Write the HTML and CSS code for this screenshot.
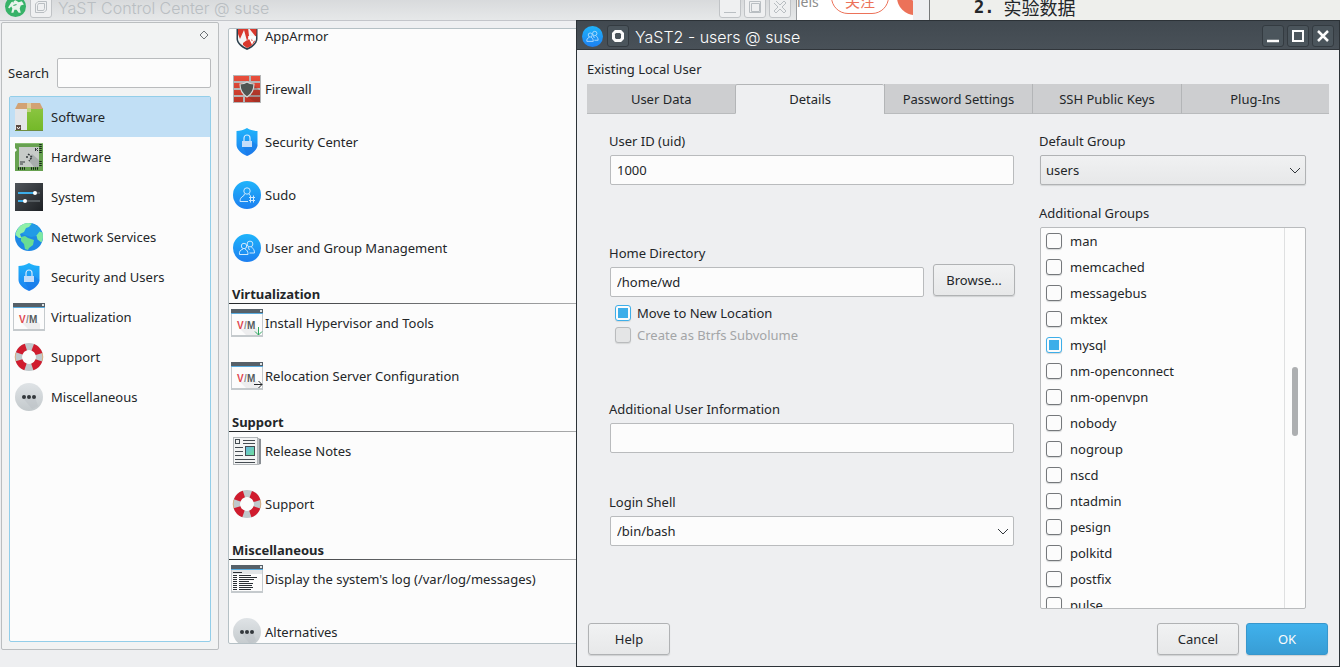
FILE: index.html
```html
<!DOCTYPE html>
<html lang="en">
<head>
<meta charset="utf-8">
<title>YaST Control Center</title>
<link rel="stylesheet" href="styles.css">
</head>
<body>
<svg class="sprite" width="0" height="0" aria-hidden="true">
  <defs>
    <linearGradient id="blue" x1="0" y1="0" x2="0" y2="1"><stop offset="0" stop-color="#1fb4fb"/><stop offset="1" stop-color="#1d7ff0"/></linearGradient>
    <linearGradient id="grey" x1="0" y1="0" x2="0" y2="1"><stop offset="0" stop-color="#dfe3e6"/><stop offset="1" stop-color="#c3c9cc"/></linearGradient>
    <linearGradient id="green" x1="0" y1="0" x2="0" y2="1"><stop offset="0" stop-color="#8bc541"/><stop offset="1" stop-color="#73b828"/></linearGradient>
    <linearGradient id="dark" x1="0" y1="0" x2="1" y2="1"><stop offset="0" stop-color="#4f5459"/><stop offset="1" stop-color="#1d2024"/></linearGradient>
    <linearGradient id="brick" x1="0" y1="0" x2="0" y2="1"><stop offset="0" stop-color="#ea4f3c"/><stop offset="1" stop-color="#bb3427"/></linearGradient>
    <linearGradient id="pic" x1="0" y1="0" x2="1" y2="1"><stop offset="0" stop-color="#64b6e6"/><stop offset="1" stop-color="#70e094"/></linearGradient>
    <symbol id="i-software" viewBox="0 0 28 28">
      <rect y="5" width="12" height="23" fill="#e4e5e8"/><rect x="12" y="5" width="16" height="23" fill="url(#green)"/>
      <path d="M3 0h22l3 6H0z" fill="#d2a274"/><path d="M12 0h4v9h-4z" fill="#e0ce9d"/><path d="M12 5h4v4h-4z" fill="#bfd37d"/>
      <rect y="27" width="28" height="1" fill="#6e8d3f"/><rect x="1" y="22" width="5" height="5" fill="#5b4a42"/><path d="M2 24l1.500 2L5 24" fill="none" stroke="#fff"/>
    </symbol>
    <symbol id="i-hardware" viewBox="0 0 28 28">
      <rect width="28" height="28" fill="#67a150"/><rect width="28" height="1" fill="#87bd70"/><path d="M0 5l2 2-2 2" fill="#fff"/>
      <rect x="4" y="4" width="20" height="20" fill="#c7cbc8"/><path d="M14 18l3-7 7 6v7h-5z" fill="#a9aead"/>
      <path d="M25.500 1v10M25.500 18v6M3 25.500h8M16 25.500h8" stroke="#17251a" stroke-width="2.500" stroke-dasharray="1 1"/>
      <path d="M20.500 5v3M23 5l-1.500 1.500L23 8M5 21h3M5 19h5" stroke="#30363a" fill="none"/>
      <path d="M11 14h2M13 11l4 3-3 4" stroke="#33383a" stroke-width="1.500" stroke-dasharray="2 1" fill="none"/>
    </symbol>
    <symbol id="i-system" viewBox="0 0 28 28">
      <rect width="28" height="28" fill="url(#dark)"/><path d="M3 10h22M3 18h22" stroke="#555b60" stroke-width="2"/>
      <path d="M3 10h16M3 18h6" stroke="#3daee9" stroke-width="2"/><circle cx="20" cy="10" r="2" fill="#fff"/><circle cx="10" cy="18" r="2" fill="#fff"/>
    </symbol>
    <symbol id="i-network" viewBox="0 0 28 28">
      <circle cx="14" cy="14" r="14" fill="#1e88e5"/><path d="M14 0a14 14 0 0 1 13 9l-5 4-6 1-9-3z" fill="#229be6"/>
      <path d="M3 5.500A14 14 0 0 1 17 .5L14 4l-3 1-2 4-4 2 1 3 2 1-4 0-3.500-3A14 14 0 0 1 3 5.500z" fill="#8ff0a8"/>
      <path d="M6 14l4-1 3 2 6 2-1 5-4 3-1 2-3-1-1-5-3-3z" fill="#69dd93"/>
      <path d="M27.500 9.500l-3-1-3 4 1 4 4 3a14 14 0 0 0 1-10z" fill="#7de8a3"/>
    </symbol>
    <symbol id="i-shield" viewBox="0 0 28 28">
      <path d="M14 0c3 2 7 3 10.500 3v14c0 4-5 9-10.500 11C8.500 26 3.500 21 3.500 17V3C7 3 11 2 14 0z" fill="url(#blue)"/>
      <path d="M19 13l5.500 4c0 4-5 9-10 11l-5-10z" fill="#1a6de0" opacity=".35"/>
      <rect x="9" y="13" width="10" height="6" fill="#c3ddfa"/><path d="M11 13v-3a3 3 0 0 1 6 0v3" fill="none" stroke="#d4e9fd" stroke-width="1.200"/>
    </symbol>
    <symbol id="i-window" viewBox="0 0 32 28">
      <rect width="32" height="28" fill="#c5cacd"/><rect x="1" y="5" width="30" height="21" fill="#fcfcfc"/><rect width="32" height="4" fill="#566068"/>
      <rect y="4" width="32" height="1" fill="#5aade0"/><rect x="29" y="1" width="2" height="2" fill="#dfe3e5"/>
    </symbol>
    <symbol id="i-vm" viewBox="0 0 32 28">
      <use href="#i-window"/><path d="M9 20l6 6h12v-5l-2-2z" fill="#eeeeef"/>
      <text x="6" y="20" class="vm-mark" fill="#e0474f">V</text><text x="13" y="20" class="vm-mark" fill="#8a8f92">/</text><text x="16" y="20" class="vm-mark" fill="#565c60">M</text>
    </symbol>
    <symbol id="i-vm-down" viewBox="0 0 32 28"><use href="#i-vm"/><path d="M27.500 18v8M24 22.500l3.500 3.500 3.500-3.500" stroke="#2fa860" fill="none"/></symbol>
    <symbol id="i-vm-right" viewBox="0 0 32 28"><use href="#i-vm"/><path d="M23 22.500h8M27.500 19l3.500 3.500-3.500 3.500" stroke="#232629" fill="none"/></symbol>
    <symbol id="i-support" viewBox="0 0 28 28">
      <circle cx="14" cy="14" r="10.500" fill="none" stroke="#c0c8cb" stroke-width="7"/>
      <circle cx="14" cy="14" r="10.500" fill="none" stroke="#d01c2e" stroke-width="7" stroke-dasharray="9.500 6.993" stroke-dashoffset="-3.500"/>
      <path d="M.8 10a14 14 0 0 0 0 8M27.200 10a14 14 0 0 1 0 8" stroke="#d6ad82" fill="none"/>
    </symbol>
    <symbol id="i-misc" viewBox="0 0 28 28">
      <circle cx="14" cy="14" r="14" fill="url(#grey)"/><path d="M8 15l9 11 6-3-3-9z" fill="#b8bfc2" opacity=".4"/>
      <circle cx="9" cy="14" r="2" fill="#33383c"/><circle cx="14" cy="14" r="2" fill="#33383c"/><circle cx="19" cy="14" r="2" fill="#33383c"/>
    </symbol>
    <symbol id="i-apparmor" viewBox="0 0 28 28">
      <path d="M14 0l10.500 3v14c0 4-5 9-10.500 11C8.500 26 3.500 21 3.500 17V3z" fill="#2b3f4c"/>
      <path d="M14 1.500L23 4v13c0 3-4 7-9 9-5-2-9-6-9-9V4z" fill="#f4f4f4"/>
      <path d="M14 2L5 4v8l2 5 4-9 3 11 2-5-1-9 8 10 .5-4V4zM10 21l4-3v8l-4-3zM14 18l3-1 5 2c-1 3-5 6-8 7z" fill="#d9382d"/>
      <path d="M16 15h6l-3 6z" fill="none" stroke="#fff" stroke-width="1.500"/>
    </symbol>
    <symbol id="i-firewall" viewBox="0 0 28 28">
      <rect width="28" height="28" fill="#b4b5b6"/>
      <path d="M1 1h15v5H1zM18 1h9v5h-9zM1 8h9v5H1zM12 8h15v5H12zM1 15h15v5H1zM18 15h9v5h-9zM1 22h9v5H1zM12 22h15v5H12z" fill="url(#brick)"/>
      <path d="M21 10l6 6v11H22l-9-6z" fill="#70281f" opacity=".3"/>
      <path d="M14 7c2 1.500 5 2 7 2 0 6-2 10-7 13-5-3-7-7-7-13 2 0 5-.5 7-2z" fill="#4e5552" stroke="#d5d8d6" stroke-width="1.200"/>
    </symbol>
    <symbol id="i-sudo" viewBox="0 0 28 28">
      <circle cx="14" cy="14" r="14" fill="url(#blue)"/>
      <g fill="none" stroke="#cde8fd"><circle cx="14" cy="10" r="3.200"/><path d="M11.500 13l-1 2C8 16 7 18 7 20.500h8M16 13l1 1.500"/><path d="M17.500 14.500v7M20.500 14.500v7M16 16.500h6M16 19.500h6"/></g>
    </symbol>
    <symbol id="i-users" viewBox="0 0 28 28">
      <circle cx="14" cy="14" r="14" fill="url(#blue)"/>
      <g fill="none" stroke="#cde8fd"><circle cx="11" cy="12" r="2.700"/><circle cx="17" cy="10" r="2.900"/><path d="M10 15c-3 1-4 3-3.500 5.500h8.500c0-3-1-4.500-3-5.500M15 13l1.500 3M18.500 13c2 2 3 3 3 6h-5"/></g>
    </symbol>
    <symbol id="i-notes" viewBox="0 0 28 28">
      <path d="M24 1l4 1v25l-4 1z" fill="#898e93"/><path d="M25.500 2v25" stroke="#c2c5c8"/><rect x=".5" y=".5" width="24" height="27" fill="#f3f4f4" stroke="#b1b5b8"/>
      <path d="M10 3.500h12M10 6.500h12M2 10.500h8M2 14.500h8M2 18.500h8M2 22.500h20M2 25.500h20" stroke="#454c52"/>
      <rect x="2.500" y="2.500" width="4" height="4" fill="none" stroke="#454c52"/><rect x="12.500" y="9.500" width="9" height="9" fill="url(#pic)" stroke="#454c52"/>
    </symbol>
    <symbol id="i-log" viewBox="0 0 32 28">
      <use href="#i-window"/><rect x="1" y="5" width="30" height="4" fill="#e2e5e7"/>
      <path d="M2 7.500h9M8 10.500h12M8 12.500h18M8 14.500h15M8 16.500h10M8 18.500h14M8 20.500h13M8 22.500h14M8 24.500h12M2 10.500h4M2 12.500h4M2 14.500h4M2 16.500h4M2 18.500h4M2 20.500h4M2 22.500h4M2 24.500h4" stroke="#2b3035"/>
    </symbol>
    <symbol id="i-yast" viewBox="0 0 20 20">
      <circle cx="10" cy="10" r="10" fill="#37b268"/><path d="M3 11l3-5 4-2 3 2 3-1 2 3-3 1-1 3 1 4h-2l-2-3-2 0-1 3H6l1-4-1-2-2 2z" fill="#e9f4ec"/><path d="M7 3l1 3M8 9l3-1" stroke="#37b268"/>
    </symbol>
    <symbol id="i-chevron" viewBox="0 0 12 8"><path d="M1 1l5 5 5-5" fill="none" stroke="#31363b"/></symbol>
    <symbol id="i-pin" viewBox="0 0 14 14"><path d="M4.500 2.500h5l2 2v5l-2 2h-5l-2-2v-5z" fill="none" stroke="currentColor" stroke-width="3"/></symbol>
    <symbol id="i-pin-off" viewBox="0 0 14 14"><path d="M4 1.500h8.500V10L10 12.500H1.500V4zM4.500 3.500h6v5l-1 2h-6v-5z" fill="none" stroke="currentColor"/></symbol>
    <symbol id="i-min" viewBox="0 0 14 14"><path d="M1 12h12" stroke="currentColor" stroke-width="2.500"/></symbol>
    <symbol id="i-max" viewBox="0 0 14 14"><path d="M2 2h10v10H2z" fill="none" stroke="currentColor" stroke-width="2"/></symbol>
    <symbol id="i-close" viewBox="0 0 14 14"><path d="M2 2l10 10M12 2L2 12" stroke="currentColor" stroke-width="2.500"/></symbol>
    <symbol id="i-min-off" viewBox="0 0 14 14"><path d="M1 12.500h12" stroke="currentColor"/></symbol>
    <symbol id="i-max-off" viewBox="0 0 14 14"><path d="M1.500 1.500h11v11h-11zM3.500 3.500h8v8h-8z" fill="none" stroke="currentColor"/></symbol>
    <symbol id="i-close-off" viewBox="0 0 14 14"><path d="M1 3l4 4-4 4 2 2 4-4 4 4 2-2-4-4 4-4-2-2-4 4-4-4" fill="none" stroke="currentColor"/></symbol>
  </defs>
</svg>

<div class="desktop">
  <div class="strip">
    <div class="strip-page">
      <span class="strip-name">iels</span>
      <button class="follow">关注</button>
      <span class="dot">1</span>
    </div>
    <div class="strip-gutter"></div>
    <div class="strip-note"><b>2.</b><span>实验数据</span></div>
  </div>

  <section class="window center" aria-label="YaST Control Center">
    <header class="bar bar-inactive">
      <svg class="app-icon"><use href="#i-yast"/></svg>
      <button class="win-btn" aria-label="Window menu"><svg><use href="#i-pin-off"/></svg></button>
      <h1 class="win-title">YaST Control Center @ suse</h1>
      <button class="win-btn" aria-label="Minimize"><svg><use href="#i-min-off"/></svg></button>
      <button class="win-btn" aria-label="Maximize"><svg><use href="#i-max-off"/></svg></button>
      <button class="win-btn" aria-label="Close"><svg><use href="#i-close-off"/></svg></button>
    </header>
    <div class="center-body">
      <aside class="side">
        <div class="side-top"><svg class="float" viewBox="0 0 10 10"><path d="M5 1l4 4-4 4-4-4z" fill="none" stroke="#6f7477"/></svg></div>
        <div class="search"><label for="q">Search</label><input id="q" class="field" type="text"></div>
        <nav class="cats">
          <a href="#" class="cat current"><svg><use href="#i-software"/></svg>Software</a>
          <a href="#" class="cat"><svg><use href="#i-hardware"/></svg>Hardware</a>
          <a href="#" class="cat"><svg><use href="#i-system"/></svg>System</a>
          <a href="#" class="cat"><svg><use href="#i-network"/></svg>Network Services</a>
          <a href="#" class="cat"><svg><use href="#i-shield"/></svg>Security and Users</a>
          <a href="#" class="cat"><svg><use href="#i-vm"/></svg>Virtualization</a>
          <a href="#" class="cat"><svg><use href="#i-support"/></svg>Support</a>
          <a href="#" class="cat"><svg><use href="#i-misc"/></svg>Miscellaneous</a>
        </nav>
      </aside>
      <main class="modules">
        <div class="modules-inner">
          <a href="#" class="mod"><svg><use href="#i-apparmor"/></svg>AppArmor</a>
          <a href="#" class="mod"><svg><use href="#i-firewall"/></svg>Firewall</a>
          <a href="#" class="mod"><svg><use href="#i-shield"/></svg>Security Center</a>
          <a href="#" class="mod"><svg><use href="#i-sudo"/></svg>Sudo</a>
          <a href="#" class="mod"><svg><use href="#i-users"/></svg>User and Group Management</a>
          <h2 class="group">Virtualization</h2>
          <a href="#" class="mod"><svg><use href="#i-vm-down"/></svg>Install Hypervisor and Tools</a>
          <a href="#" class="mod"><svg><use href="#i-vm-right"/></svg>Relocation Server Configuration</a>
          <h2 class="group">Support</h2>
          <a href="#" class="mod"><svg><use href="#i-notes"/></svg>Release Notes</a>
          <a href="#" class="mod"><svg><use href="#i-support"/></svg>Support</a>
          <h2 class="group">Miscellaneous</h2>
          <a href="#" class="mod"><svg><use href="#i-log"/></svg>Display the system's log (/var/log/messages)</a>
          <a href="#" class="mod"><svg><use href="#i-misc"/></svg>Alternatives</a>
        </div>
      </main>
    </div>
  </section>

  <section class="window dialog" role="dialog" aria-label="YaST2 - users">
    <header class="bar bar-active">
      <svg class="app-icon"><use href="#i-users"/></svg>
      <button class="win-btn" aria-label="Window menu"><svg><use href="#i-pin"/></svg></button>
      <h1 class="win-title">YaST2 - users @ suse</h1>
      <button class="win-btn" aria-label="Minimize"><svg><use href="#i-min"/></svg></button>
      <button class="win-btn" aria-label="Maximize"><svg><use href="#i-max"/></svg></button>
      <button class="win-btn" aria-label="Close"><svg><use href="#i-close"/></svg></button>
    </header>
    <form class="dialog-body">
      <h2 class="heading">Existing Local User</h2>
      <div class="tabs" role="tablist">
        <button type="button" class="tab" role="tab">User Data</button>
        <button type="button" class="tab active" role="tab" aria-selected="true">Details</button>
        <button type="button" class="tab" role="tab">Password Settings</button>
        <button type="button" class="tab" role="tab">SSH Public Keys</button>
        <button type="button" class="tab" role="tab">Plug-Ins</button>
      </div>
      <div class="panel">
        <div class="column left">
          <div class="row">
            <label class="label" for="uid">User ID (uid)</label>
            <input id="uid" class="field" type="text" value="1000">
          </div>
          <div class="row">
            <label class="label" for="home">Home Directory</label>
            <div class="home">
              <input id="home" class="field" type="text" value="/home/wd">
              <button type="button" class="btn">Browse...</button>
            </div>
            <div class="checks">
              <label class="check"><input type="checkbox" checked>Move to New Location</label>
              <label class="check disabled"><input type="checkbox" disabled>Create as Btrfs Subvolume</label>
            </div>
          </div>
          <div class="row">
            <label class="label" for="info">Additional User Information</label>
            <input id="info" class="field" type="text">
          </div>
          <div class="row">
            <label class="label" for="shell">Login Shell</label>
            <div class="combo">
              <select id="shell" class="field"><option>/bin/bash</option></select>
              <svg class="chevron"><use href="#i-chevron"/></svg>
            </div>
          </div>
        </div>
        <div class="column">
          <label class="label" for="group">Default Group</label>
          <div class="combo">
            <select id="group" class="field raised"><option>users</option></select>
            <svg class="chevron"><use href="#i-chevron"/></svg>
          </div>
          <h3 class="label groups-label">Additional Groups</h3>
          <div class="groups">
            <div class="groups-list">
              <label class="check"><input type="checkbox">man</label>
              <label class="check"><input type="checkbox">memcached</label>
              <label class="check"><input type="checkbox">messagebus</label>
              <label class="check"><input type="checkbox">mktex</label>
              <label class="check"><input type="checkbox" checked>mysql</label>
              <label class="check"><input type="checkbox">nm-openconnect</label>
              <label class="check"><input type="checkbox">nm-openvpn</label>
              <label class="check"><input type="checkbox">nobody</label>
              <label class="check"><input type="checkbox">nogroup</label>
              <label class="check"><input type="checkbox">nscd</label>
              <label class="check"><input type="checkbox">ntadmin</label>
              <label class="check"><input type="checkbox">pesign</label>
              <label class="check"><input type="checkbox">polkitd</label>
              <label class="check"><input type="checkbox">postfix</label>
              <label class="check"><input type="checkbox">pulse</label>
            </div>
            <div class="track"><div class="thumb"></div></div>
          </div>
        </div>
      </div>
      <footer class="actions">
        <button type="button" class="btn help">Help</button>
        <button type="button" class="btn">Cancel</button>
        <button type="submit" class="btn primary">OK</button>
      </footer>
    </form>
  </section>
</div>
</body>
</html>
```
FILE: styles.css
```css
* { box-sizing: border-box; }
html, body { height: 100%; }
body, button, input, select {
  font-family: "Noto Sans", "Noto Sans CJK SC", sans-serif;
  font-size: 13px;
  color: #232629;
}
body { margin: 0; line-height: 18px; }
a { color: inherit; text-decoration: none; }
h1, h2, h3 { margin: 0; font-size: 13px; font-weight: 400; }
button { padding: 0; }
.sprite { position: absolute; }
.vm-mark { font: 700 10px "Liberation Sans", sans-serif; }

.desktop { position: relative; height: 100vh; overflow: hidden; background: #eeefec; }
.window { position: absolute; display: flex; flex-direction: column; background: #eeeff1; }

/* Browser strip behind the windows */
.strip { display: flex; height: 20px; padding-left: 797px; overflow: hidden; }
.strip-page { display: flex; width: 116px; align-items: flex-end; background: #fff; overflow: hidden; }
.strip-name { width: 34px; flex: none; height: 27px; line-height: 18px; color: #8c8c8c; font-size: 14px; }
.follow {
  flex: none; width: 58px; height: 34px; margin-bottom: 6px; padding-top: 6px;
  border: 1px solid #ec7259; border-radius: 17px; background: #fff; color: #ec7259; font-size: 15px;
}
.dot { flex: none; width: 36px; height: 36px; margin: 0 0 5px 8px; border-radius: 50%; background: #ec7259; color: #fff; line-height: 46px; text-align: center; }
.strip-gutter { width: 17px; background: #eeeff1; border-right: 1px solid #77797a; }
.strip-note { display: flex; gap: 9px; padding-left: 44px; font: 18px/14px "Noto Sans CJK SC", sans-serif; }
.strip-note b { font-family: "DejaVu Sans Mono", monospace; font-size: 17px; }

/* Title bars */
.bar { display: flex; flex: none; align-items: center; gap: 3px; padding: 2px 5px 0 5px; }
.app-icon { width: 21px; height: 21px; margin-right: 1px; }
.win-title { flex: 1; padding: 2px 0 0 3px; font: 300 16px/20px "Inter", sans-serif; }
.win-btn { display: grid; place-items: center; width: 22px; height: 22px; border: 1px solid; border-radius: 3px; color: inherit; }
.win-btn svg { width: 14px; height: 14px; }
.bar-active { height: 29px; background: linear-gradient(#414950, #495158); border-bottom: 1px solid #31363b; color: #fcfcfc; }
.bar-active .win-btn { background: #4b555c; border-color: #343b41; }
.bar-inactive { height: 30px; background: linear-gradient(#d2d4d6, #e6e8e9); border-bottom: 1px solid #c3c5ca; color: #b9bec2; }
.bar-inactive .win-btn { background: #eff0f1; border-color: #c0c3c6; }

/* Control center */
.center { top: -9px; bottom: 0; left: 0; width: 797px; border-right: 1px solid #9a9da0; }
.center-body { display: flex; flex: 1; gap: 9px; min-height: 0; padding: 1px 8px 17px 1px; }
.side { display: flex; flex: none; flex-direction: column; width: 218px; padding: 7px 7px 7px; border: 1px solid #bbbec0; border-radius: 2px; background: #f2f3f3; }
.side-top { display: flex; height: 28px; justify-content: flex-end; padding-right: 2px; }
.float { width: 10px; height: 10px; }
.search { display: flex; align-items: center; gap: 8px; margin-bottom: 8px; margin-left: -1px; }
.search .field { flex: 1; min-width: 0; }
.cats { flex: 1; border: 1px solid #93cee9; border-radius: 2px; background: #fcfcfc; }
.cat { display: flex; align-items: center; gap: 6px; height: 40px; padding-left: 3px; }
.cat.current { background: #c1dff5; }
.cat svg, .mod svg { flex: none; width: 32px; height: 28px; }
.modules { flex: 1; margin-top: 6px; margin-bottom: 6px; overflow: hidden; border: 1px solid #b5c0c5; border-radius: 2px; background: #fcfcfc; }
.modules-inner { margin-top: -12px; }
.mod { display: flex; gap: 2px; height: 53px; padding: 5px 0 0 2px; line-height: 28px; }
.group {
  height: 22px; padding-left: 3px; line-height: 24px; font-weight: 700;
  border-bottom: 1px solid; border-image: linear-gradient(90deg, #232629, #fcfcfc) 1;
}

/* Form controls */
.field {
  width: 100%; height: 30px; padding: 0 6px; margin: 0;
  border: 1px solid #b9bbbd; border-radius: 2px; background: #fcfcfc; outline: 0;
}
select.field { appearance: none; }
.raised { background: linear-gradient(#f0f1f2, #e7e8e9); padding-left: 5px; border-color: #b0b2b4; box-shadow: 0 1px 1px #d2d4d5; }
.combo { position: relative; }
.chevron { position: absolute; right: 5px; top: 12px; width: 12px; height: 8px; pointer-events: none; }
.btn {
  width: 82px; height: 32px; border: 1px solid #b0b2b4; border-radius: 3px;
  background: linear-gradient(#f1f2f3, #e7e8e9); box-shadow: 0 1px 1px #cfd1d2;
}
.primary { background: linear-gradient(#40b1ec, #389dd5); border-color: #3797cd; color: #fcfcfc; }
.check { display: flex; align-items: center; gap: 6px; }
.check input {
  flex: none; width: 16px; height: 16px; margin: 0; appearance: none;
  border: 1px solid #75787b; border-radius: 3px; background: #fcfcfc; box-shadow: 0 1px 1px #d5d7d8;
}
.check input:checked { border-color: #3daee9; background: linear-gradient(#3daee9, #3daee9) center / 10px 10px no-repeat #fcfcfc; }
.check input:disabled { border-color: #b9bbbd; background: #e4e5e6; }
.disabled { color: #a3a5a7; }

/* User dialog */
.dialog { top: 20px; right: 0; bottom: 0; left: 576px; border: 1px solid #2c3237; }
.dialog-body { display: flex; flex: 1; flex-direction: column; min-height: 0; padding: 10px 10px 11px; }
.heading { margin-bottom: 6px; }
.tabs { display: grid; flex: none; grid-template-columns: repeat(5, 1fr); height: 30px; }
.tab { border: 0; border-left: 1px solid #b3b5b7; border-bottom: 1px solid #b9bbbd; background: #cdced0; }
.tab:first-child { border-left: 0; }
.tab.active { border-top: 1px solid #b3b5b7; border-bottom-color: #eeeff1; border-radius: 2px 2px 0 0; background: #eeeff1; }
.panel { display: grid; flex: 1; grid-template-columns: 405fr 267fr; grid-template-rows: minmax(0, 1fr); gap: 25px; min-height: 0; padding: 18px 23px 14px 22px; }
.column { display: flex; flex-direction: column; min-width: 0; min-height: 0; padding-left: 1px; }
.label { margin: 0 0 5px -1px; }
.row { display: flex; flex-direction: column; margin-bottom: 59px; }
.row:nth-child(2) { margin-bottom: 56px; }
.row:nth-child(3) { margin-bottom: 40px; }
.home { display: flex; align-items: flex-end; gap: 9px; height: 33px; margin-top: -3px; }
.home .field { flex: 1; min-width: 0; }
.home .btn { flex: none; align-self: flex-start; margin-right: -1px; }
.checks { display: flex; flex-direction: column; gap: 4px; padding: 7px 0 0 5px; }
.groups-label { margin-top: 19px; }
.groups { display: flex; flex: 1; min-height: 0; overflow: hidden; border: 1px solid #b9bbbd; border-radius: 2px; background: #fcfcfc; }
.groups-list { flex: 1; padding-left: 5px; }
.groups-list .check { height: 26px; gap: 8px; }
.track { width: 21px; padding: 139px 7px 0; border-left: 1px solid #dfe0e1; }
.thumb { width: 6px; height: 69px; border-radius: 3px; background: #adafb1; }
.actions { display: flex; flex: none; gap: 7px; padding: 0 1px; }
.help { margin-right: auto; }
```
